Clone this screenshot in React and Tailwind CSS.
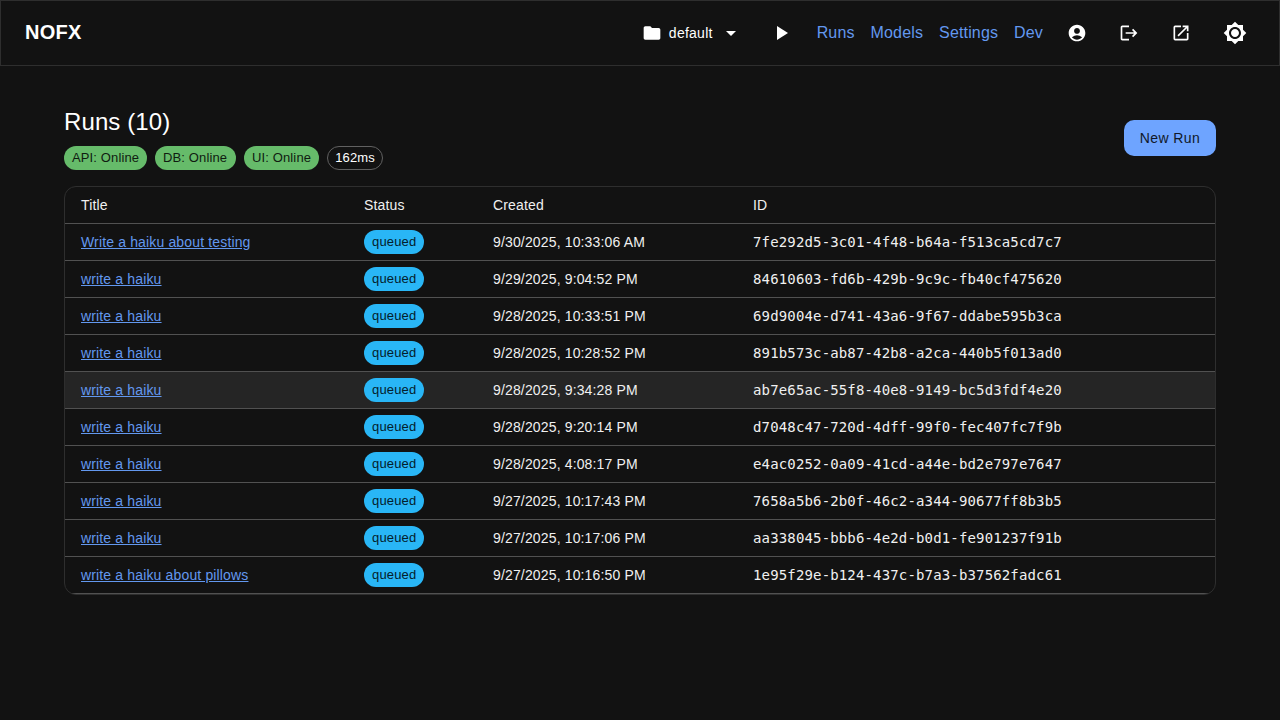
import React from "react";
import { MdFolder, MdArrowDropDown, MdPlayArrow, MdAccountCircle, MdLogout, MdOpenInNew, MdBrightness7 } from "react-icons/md";

const runs = [
  ["Write a haiku about testing", "9/30/2025, 10:33:06 AM", "7fe292d5-3c01-4f48-b64a-f513ca5cd7c7"],
  ["write a haiku", "9/29/2025, 9:04:52 PM", "84610603-fd6b-429b-9c9c-fb40cf475620"],
  ["write a haiku", "9/28/2025, 10:33:51 PM", "69d9004e-d741-43a6-9f67-ddabe595b3ca"],
  ["write a haiku", "9/28/2025, 10:28:52 PM", "891b573c-ab87-42b8-a2ca-440b5f013ad0"],
  ["write a haiku", "9/28/2025, 9:34:28 PM", "ab7e65ac-55f8-40e8-9149-bc5d3fdf4e20"],
  ["write a haiku", "9/28/2025, 9:20:14 PM", "d7048c47-720d-4dff-99f0-fec407fc7f9b"],
  ["write a haiku", "9/28/2025, 4:08:17 PM", "e4ac0252-0a09-41cd-a44e-bd2e797e7647"],
  ["write a haiku", "9/27/2025, 10:17:43 PM", "7658a5b6-2b0f-46c2-a344-90677ff8b3b5"],
  ["write a haiku", "9/27/2025, 10:17:06 PM", "aa338045-bbb6-4e2d-b0d1-fe901237f91b"],
  ["write a haiku about pillows", "9/27/2025, 10:16:50 PM", "1e95f29e-b124-437c-b7a3-b37562fadc61"],
];

function Chip({ w, children }) {
  return <span className={`h-6 ${w} px-2 whitespace-nowrap rounded-full bg-[#66bb6a] text-[#101c11] text-[13px] tracking-[0.13px] flex items-center`}>{children}</span>;
}

export default function App() {
  return (
    <div className="min-h-[720px] bg-[#121212] text-white font-['Liberation_Sans',Arial,sans-serif]">
      <header className="h-[66px] border border-[#2e2e2e] flex items-center pl-6 pr-[32px]">
        <div className="text-[20px] font-bold tracking-[0.25px] pb-[2px]">NOFX</div>
        <div className="ml-auto flex items-center">
          <MdFolder size={20} className="mr-[7px]" />
          <span className="text-[14px] tracking-[0.25px]">default</span>
          <MdArrowDropDown size={24} className="ml-[6px]" />
          <MdPlayArrow size={24} className="ml-[26px]" />
          <nav className="flex items-center gap-4 ml-[24px] text-[16px] tracking-[0.15px] text-[#6398ef]">
            <span>Runs</span>
            <span>Models</span>
            <span>Settings</span>
            <span>Dev</span>
          </nav>
          <MdAccountCircle size={20} className="ml-[24px]" />
          <MdLogout size={20} className="ml-[32px]" />
          <MdOpenInNew size={20} className="ml-[32px]" />
          <MdBrightness7 size={24} className="ml-[32px]" />
        </div>
      </header>
      <main className="px-16 pt-[40px]">
        <div className="flex items-center justify-between">
          <div>
            <h1 className="text-[24px] leading-8 tracking-[0.1px]">Runs (10)</h1>
            <div className="flex gap-2 mt-[8px]">
              <Chip w="w-[83px]">API: Online</Chip>
              <Chip w="w-[81px]">DB: Online</Chip>
              <Chip w="w-[75px]">UI: Online</Chip>
              <span className="h-6 w-[56px] justify-center rounded-full border border-[#616161] text-[13px] tracking-[0.1px] flex items-center">162ms</span>
            </div>
          </div>
          <button className="w-[92px] h-9 rounded-[10px] bg-[#6ea4ff] text-[#101828] text-[14px] tracking-[0.4px]">New Run</button>
        </div>
        <div className="mt-4 border border-[#2e2e2e] rounded-xl overflow-hidden">
          <table className="w-full border-collapse text-[14px] tracking-[0.15px] text-[#f0f0f0] table-fixed">
            <colgroup>
              <col className="w-[283px]" />
              <col className="w-[129px]" />
              <col className="w-[260px]" />
              <col />
            </colgroup>
            <thead>
              <tr className="h-[36px] border-b border-[#515151]">
                <th className="px-4 pt-[2px] text-left font-normal">Title</th>
                <th className="px-4 pt-[2px] text-left font-normal">Status</th>
                <th className="px-4 pt-[2px] text-left font-normal">Created</th>
                <th className="px-4 pt-[2px] text-left font-normal">ID</th>
              </tr>
            </thead>
            <tbody>
              {runs.map((r, i) => (
                <tr key={r[2]} className={`h-[37px] border-b border-[#515151] ${i === 4 ? "bg-[#252525]" : ""}`}>
                  <td className="px-4 pt-[2px]"><a className="text-[#6398ef] underline">{r[0]}</a></td>
                  <td className="px-4">
                    <span className="inline-flex items-center h-6 px-2 rounded-full bg-[#29b6f6] text-[#04202c] text-[13px] tracking-[0.16px] align-middle">queued</span>
                  </td>
                  <td className="px-4 pt-[2px]">{r[1]}</td>
                  <td className="px-4 pt-[2px] font-['DejaVu_Sans_Mono',monospace]">{r[2]}</td>
                </tr>
              ))}
            </tbody>
          </table>
        </div>
      </main>
    </div>
  );
}
